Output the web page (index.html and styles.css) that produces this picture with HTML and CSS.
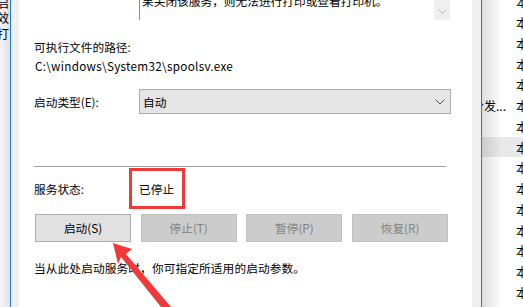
FILE: index.html
```html
<!DOCTYPE html>
<html lang="zh-CN">
<head>
    <meta charset="UTF-8">
    <title>Print Spooler 属性</title>
    <link rel="stylesheet" href="styles.css">
</head>
<body>
    <!-- 后面的窗口（左侧露出的一条） -->
    <div class="bg-left">
        <div class="line">启</div>
        <div class="line">效</div>
        <div class="line">打</div>
    </div>

    <!-- 服务属性对话框 -->
    <div class="dialog">
        <div class="page">
            <div class="desc">
                <div class="desc-text">果关闭该服务，则无法进行打印或查看打印机。</div>
                <div class="scroll">
                    <svg width="9" height="5" viewBox="0 0 9 5"><path d="M0.5 0.5 L4.5 4.5 L8.5 0.5" fill="none" stroke="#b4b4b4" stroke-width="1"/></svg>
                </div>
            </div>

            <div class="label path-label">可执行文件的路径:</div>
            <div class="label path">C:\windows\System32\spoolsv.exe</div>

            <div class="row start-type">
                <div class="label key">启动类型(E):</div>
                <div class="select">
                    <span>自动</span>
                    <svg width="10" height="6" viewBox="0 0 10 6"><path d="M0.5 0.5 L5 5 L9.5 0.5" fill="none" stroke="#555" stroke-width="1"/></svg>
                </div>
            </div>

            <div class="sep"></div>

            <div class="row status">
                <div class="label key">服务状态:</div>
                <div class="label value">已停止</div>
            </div>

            <div class="buttons">
                <div class="btn">启动(S)</div>
                <div class="btn disabled">停止(T)</div>
                <div class="btn disabled">暂停(P)</div>
                <div class="btn disabled">恢复(R)</div>
            </div>

            <div class="label hint">当从此处启动服务时，你可指定所适用的启动参数。</div>
        </div>
    </div>

    <!-- 后面的服务列表（右侧露出的一条） -->
    <div class="bg-right">
        <div class="list">
            <div class="item"><span class="d"></span><span class="n">本地系统</span></div>
            <div class="item"><span class="d"></span><span class="n">本地系统</span></div>
            <div class="item"><span class="d"></span><span class="n">本地系统</span></div>
            <div class="item"><span class="d"></span><span class="n">本地系统</span></div>
            <div class="item"><span class="d"></span><span class="n">本地系统</span></div>
            <div class="item"><span class="d">分发...</span><span class="n">本地系统</span></div>
            <div class="item"><span class="d"></span><span class="n">本地系统</span></div>
            <div class="item sel"><span class="d"></span><span class="n">本地系统</span></div>
            <div class="item"><span class="d"></span><span class="n">本地系统</span></div>
            <div class="item"><span class="d"></span><span class="n">本地系统</span></div>
            <div class="item"><span class="d"></span><span class="n">本地系统</span></div>
            <div class="item"><span class="d"></span><span class="n">本地系统</span></div>
            <div class="item"><span class="d"></span><span class="n">本地系统</span></div>
            <div class="item"><span class="d"></span><span class="n">本地系统</span></div>
            <div class="item"><span class="d"></span><span class="n">本地系统</span></div>
            <div class="item"><span class="d"></span><span class="n">本地系统</span></div>
        </div>
        <div class="shadow"></div>
    </div>

    <!-- 标注箭头 -->
    <svg class="arrow" width="523" height="307" viewBox="0 0 523 307">
        <polygon points="113,243 132,249 126,254 171,307 161,307 121,257 118,264" fill="#f03a3a"/>
    </svg>
</body>
</html>
```

FILE: styles.css
```css
* {
    padding: 0;
    margin: 0;
    box-sizing: border-box;
}
body {
    width: 523px;
    height: 307px;
    overflow: hidden;
    display: flex;
    position: relative;
    background-color: #fff;
    font-family: "Noto Sans CJK SC", "Noto Sans", sans-serif;
    font-size: 11.7px;
    color: #000;
}

/* 左侧背景窗口 */
.bg-left {
    width: 10px;
    flex-shrink: 0;
    height: 307px;
    overflow: hidden;
    background: linear-gradient(to right, #f6f6f6, #e0e0e0);
}
.bg-left .line {
    display: flex;
    justify-content: flex-end;
    white-space: nowrap;
    line-height: 15.5px;
    font-size: 12px;
    padding-right: 1px;
}
.bg-left .line:first-child {
    margin-top: -5.5px;
}

/* 对话框 */
.dialog {
    width: 472px;
    flex-shrink: 0;
    height: 307px;
    background-color: #f0f0f0;
    border-left: 1px solid #1a7fd4;
    border-right: 1px solid #1a7fd4;
    padding: 0 9px 0 8px;
}
.page {
    height: 307px;
    background-color: #fff;
    padding-left: 15px;
}
.label {
    line-height: 16px;
    white-space: nowrap;
}

.desc {
    display: flex;
    margin-left: 105px;
    width: 311px;
    height: 20px;
    border-left: 1px solid #8c8c8c;
    overflow: hidden;
}
.desc-text {
    flex: 1;
    padding-left: 2px;
    margin-top: -7px;
    line-height: 16px;
    white-space: nowrap;
}
.scroll {
    width: 16px;
    flex-shrink: 0;
    height: 20px;
    background-color: #f0f0f0;
    display: flex;
    justify-content: center;
    align-items: flex-end;
    padding-bottom: 6px;
}

.path-label {
    margin-top: 19px;
}
.path {
    margin-top: 3px;
    padding-left: 1px;
    letter-spacing: 0.3px;
}

.row {
    display: flex;
    align-items: center;
}
.row .key {
    width: 105px;
    flex-shrink: 0;
}
.start-type {
    margin-top: 15px;
}
.select {
    width: 312px;
    height: 25px;
    background-color: #e5e5e5;
    border: 1px solid #acacac;
    display: flex;
    align-items: center;
    justify-content: space-between;
    padding: 0 5px 0 3px;
}
.select span {
    line-height: 16px;
}

.sep {
    margin-top: 52px;
    width: 412px;
    height: 1px;
    background-color: #a0a0a0;
}

.status {
    margin-top: 14px;
}
.status .value {
    position: relative;
}
.status .value::after {
    content: "";
    position: absolute;
    left: -10px;
    top: -13px;
    width: 50px;
    height: 35px;
    border: 3px solid #f03a3a;
}

.buttons {
    display: flex;
    gap: 9.7px;
    margin-top: 17px;
    padding-left: 1px;
}
.btn {
    width: 96px;
    height: 28px;
    background-color: #e1e1e1;
    border: 1px solid #adadad;
    display: flex;
    align-items: center;
    justify-content: center;
    line-height: 16px;
}
.btn.disabled {
    background-color: #cccccc;
    border-color: #bfbfbf;
    color: #838383;
}

.hint {
    margin-top: 18px;
    letter-spacing: 0.1px;
}

/* 右侧背景服务列表 */
.bg-right {
    flex: 1;
    min-width: 0;
    height: 307px;
    position: relative;
    overflow: hidden;
    background-color: #fff;
}
.list {
    margin-top: -8.6px;
}
.item {
    height: 20.75px;
    display: flex;
    align-items: center;
    white-space: nowrap;
    font-size: 12px;
}
.item.sel {
    background-color: #e9e9e9;
}
.item .d {
    width: 34px;
    flex-shrink: 0;
    display: flex;
    justify-content: flex-end;
    overflow: hidden;
    padding-right: 10px;
}
.shadow {
    position: absolute;
    left: 0;
    top: 0;
    width: 20px;
    height: 307px;
    background: linear-gradient(to right, rgba(0, 0, 0, 0.13), rgba(0, 0, 0, 0));
}

.arrow {
    position: absolute;
    left: 0;
    top: 0;
    pointer-events: none;
}
```
